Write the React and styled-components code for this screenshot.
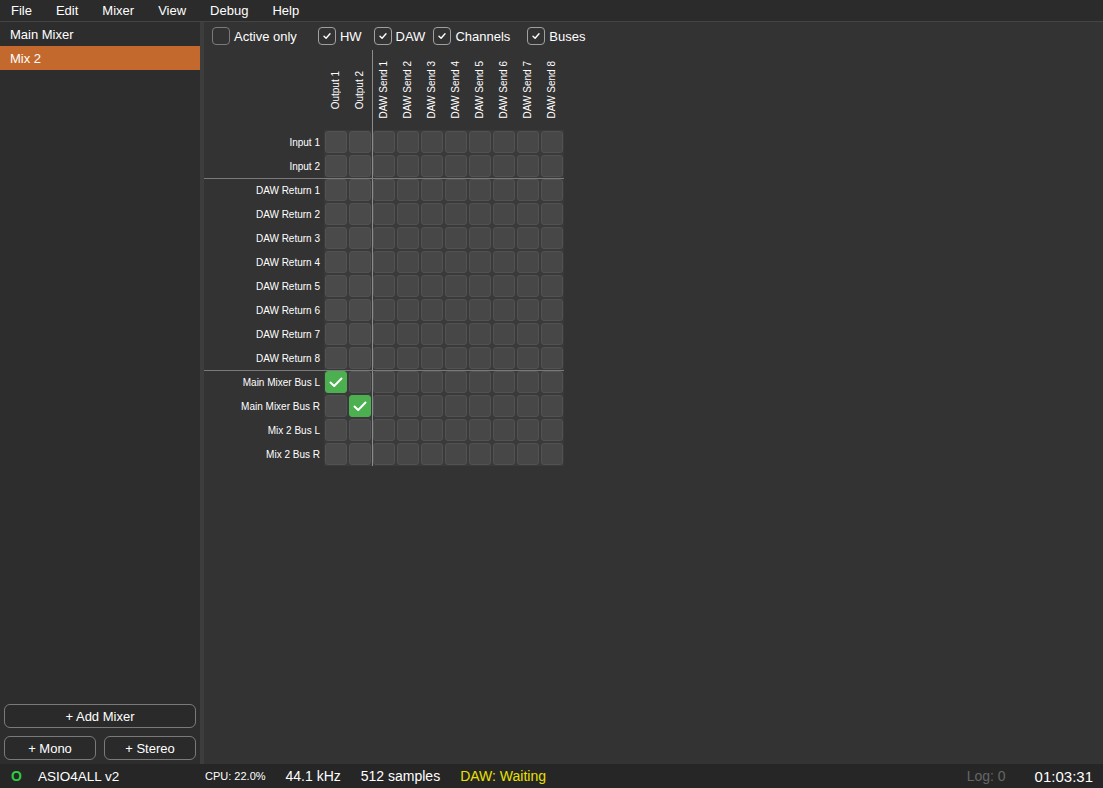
import React from "react";
import styled, { createGlobalStyle } from "styled-components";

const Global = createGlobalStyle`
  html, body { margin: 0; padding: 0; background: #333333; }
  body { font-family: "Liberation Sans", Arial, sans-serif; color: #f0f0f0; }
  * { box-sizing: border-box; }
`;

const Shell = styled.div`
  width: 1103px;
  height: 788px;
  display: flex;
  flex-direction: column;
  background: #333333;
  overflow: hidden;
`;

const MenuBar = styled.div`
  height: 22px;
  display: flex;
  align-items: center;
  background: #2b2b2b;
  border-bottom: 1px solid #444444;
`;

const MenuItem = styled.div`
  font-size: 13px;
  color: #ffffff;
  padding: 0 12px;
  &:first-child { padding-left: 11px; }
`;

const Body = styled.div`
  flex: 1;
  display: flex;
  min-height: 0;
`;

const Sidebar = styled.div`
  width: 200px;
  display: flex;
  flex-direction: column;
  background: #2d2d2d;
`;

const MixerItem = styled.div`
  height: 24px;
  display: flex;
  align-items: center;
  padding-left: 10px;
  font-size: 13px;
  color: #ffffff;
  background: ${(p) => (p.$active ? "#c4692e" : "transparent")};
`;

const Spacer = styled.div`
  flex: 1;
`;

const ButtonArea = styled.div`
  display: flex;
  flex-direction: column;
  gap: 8px;
  padding: 0 4px 4px 4px;
`;

const ButtonRow = styled.div`
  display: flex;
  gap: 8px;
`;

const SideButton = styled.button`
  flex: ${(p) => (p.$grow ? "1" : "none")};
  height: 24px;
  border: 1px solid #7a7a7a;
  border-radius: 6px;
  background: #2a2a2a;
  color: #ffffff;
  font-family: "Liberation Sans", Arial, sans-serif;
  font-size: 13px;
  padding: 0;
  display: flex;
  align-items: center;
  justify-content: center;
`;

const Splitter = styled.div`
  width: 4px;
  background: #3d3d3d;
`;

const Main = styled.div`
  flex: 1;
  display: flex;
  flex-direction: column;
  background: #333333;
`;

const FilterBar = styled.div`
  height: 28px;
  display: flex;
  align-items: center;
  padding-left: 8px;
`;

const FilterItem = styled.label`
  display: flex;
  align-items: center;
  gap: 4px;
  font-size: 13px;
  color: #ffffff;
  margin-right: ${(p) => p.$gap}px;
`;

const Box = styled.span`
  width: 18px;
  height: 18px;
  border: 1px solid ${(p) => (p.$checked ? "#a0a0a0" : "#7a7a7a")};
  border-radius: 4px;
  display: flex;
  align-items: center;
  justify-content: center;
`;

const Matrix = styled.div`
  position: relative;
  display: flex;
  flex-direction: column;
  width: 360px;
`;

const VLine = styled.div`
  position: absolute;
  left: 168px;
  top: 0;
  bottom: 0;
  width: 1px;
  background: #8c8c8c;
`;

const HeaderRow = styled.div`
  display: flex;
  height: 80px;
  padding-left: 120px;
`;

const ColHead = styled.div`
  width: 24px;
  height: 80px;
  display: flex;
  align-items: center;
  justify-content: center;
`;

const ColText = styled.span`
  writing-mode: vertical-rl;
  transform: rotate(180deg);
  font-size: 10px;
  color: #ffffff;
  white-space: nowrap;
  line-height: 12px;
`;

const Row = styled.div`
  position: relative;
  display: flex;
  height: 24px;
  &::before {
    content: "";
    display: ${(p) => (p.$divider ? "block" : "none")};
    position: absolute;
    left: 0;
    right: 0;
    top: 0;
    height: 1px;
    background: #7a7a7a;
    z-index: 2;
  }
`;

const RowLabel = styled.div`
  width: 120px;
  padding-right: 4px;
  display: flex;
  align-items: center;
  justify-content: flex-end;
  font-size: 10px;
  color: #ffffff;
  white-space: nowrap;
`;

const Slot = styled.div`
  width: 24px;
  height: 24px;
  background: #3a3a3a;
  padding: 1px;
`;

const Cell = styled.div`
  width: 22px;
  height: 22px;
  border-radius: 3px;
  background: ${(p) => (p.$on ? "#4caf50" : p.$hw ? "#4a4a4a" : "#474747")};
  border: 1px solid ${(p) => (p.$on ? "#4caf50" : "#525252")};
  display: flex;
  align-items: center;
  justify-content: center;
`;

const StatusBar = styled.div`
  height: 24px;
  display: flex;
  align-items: center;
  background: #262626;
  color: #ffffff;
`;

const StatusLeft = styled.div`
  width: 204px;
  display: flex;
  align-items: center;
  padding-left: 11px;
  gap: 16px;
`;

const Led = styled.span`
  color: #2ecc40;
  font-weight: bold;
  font-size: 14px;
`;

const StatusMid = styled.div`
  flex: 1;
  display: flex;
  align-items: center;
  gap: 20px;
  padding-left: 1px;
`;

const StatusText = styled.span`
  font-size: ${(p) => p.$size || 14}px;
  color: ${(p) => p.$color || "#ffffff"};
  white-space: nowrap;
`;

const StatusRight = styled.div`
  display: flex;
  align-items: center;
  gap: 29px;
  padding-right: 10px;
`;

const SmallCheck = () => (
  <svg width="10" height="10" viewBox="0 0 10 10">
    <path d="M2 5.2 L4.1 7.2 L8 2.8" fill="none" stroke="#ffffff" strokeWidth="1.4" strokeLinecap="round" strokeLinejoin="round" />
  </svg>
);

const BigCheck = () => (
  <svg width="16" height="16" viewBox="0 0 16 16">
    <path d="M2.5 8.5 L6.2 12 L13.5 4.5" fill="none" stroke="#ffffff" strokeWidth="2" strokeLinecap="round" strokeLinejoin="round" />
  </svg>
);

const menus = ["File", "Edit", "Mixer", "View", "Debug", "Help"];
const cols = ["Output 1", "Output 2", ...Array.from({ length: 8 }, (_, i) => `DAW Send ${i + 1}`)];
const rows = [
  { name: "Input 1" },
  { name: "Input 2" },
  ...Array.from({ length: 8 }, (_, i) => ({ name: `DAW Return ${i + 1}`, divider: i === 0 })),
  { name: "Main Mixer Bus L", divider: true, on: 0 },
  { name: "Main Mixer Bus R", on: 1 },
  { name: "Mix 2 Bus L" },
  { name: "Mix 2 Bus R" },
];
const filters = [
  { label: "Active only", checked: false, gap: 21 },
  { label: "HW", checked: true, gap: 12 },
  { label: "DAW", checked: true, gap: 8 },
  { label: "Channels", checked: true, gap: 17 },
  { label: "Buses", checked: true, gap: 0 },
];

export default function App() {
  return (
    <Shell>
      <Global />
      <MenuBar>
        {menus.map((m) => (
          <MenuItem key={m}>{m}</MenuItem>
        ))}
      </MenuBar>
      <Body>
        <Sidebar>
          <MixerItem>Main Mixer</MixerItem>
          <MixerItem $active>Mix 2</MixerItem>
          <Spacer />
          <ButtonArea>
            <SideButton>+ Add Mixer</SideButton>
            <ButtonRow>
              <SideButton $grow>+ Mono</SideButton>
              <SideButton $grow>+ Stereo</SideButton>
            </ButtonRow>
          </ButtonArea>
        </Sidebar>
        <Splitter />
        <Main>
          <FilterBar>
            {filters.map((f) => (
              <FilterItem key={f.label} $gap={f.gap}>
                <Box $checked={f.checked}>{f.checked && <SmallCheck />}</Box>
                {f.label}
              </FilterItem>
            ))}
          </FilterBar>
          <Matrix>
            <HeaderRow>
              {cols.map((c) => (
                <ColHead key={c}>
                  <ColText>{c}</ColText>
                </ColHead>
              ))}
            </HeaderRow>
            {rows.map((r) => (
              <Row key={r.name} $divider={r.divider}>
                <RowLabel>{r.name}</RowLabel>
                {cols.map((c, ci) => (
                  <Slot key={c}>
                    <Cell $on={r.on === ci} $hw={ci < 2}>
                      {r.on === ci && <BigCheck />}
                    </Cell>
                  </Slot>
                ))}
              </Row>
            ))}
            <VLine />
          </Matrix>
        </Main>
      </Body>
      <StatusBar>
        <StatusLeft>
          <Led>O</Led>
          <StatusText $size={13.5}>ASIO4ALL v2</StatusText>
        </StatusLeft>
        <StatusMid>
          <StatusText $size={11}>CPU: 22.0%</StatusText>
          <StatusText>44.1 kHz</StatusText>
          <StatusText>512 samples</StatusText>
          <StatusText $color="#e8e000">DAW: Waiting</StatusText>
        </StatusMid>
        <StatusRight>
          <StatusText $color="#666666">Log: 0</StatusText>
          <StatusText $size={15}>01:03:31</StatusText>
        </StatusRight>
      </StatusBar>
    </Shell>
  );
}
